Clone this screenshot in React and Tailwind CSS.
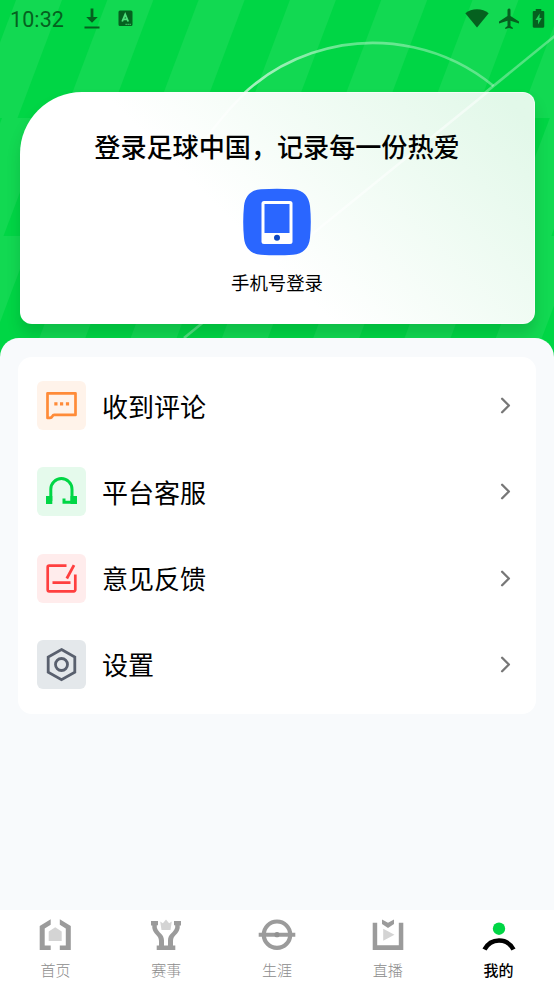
import { ChevronRight } from 'lucide-react'

const STRIPE_ROWS = [
  { y: 0, start: 16 },
  { y: 118, start: 2 },
  { y: 236, start: -13.5 }
]
const STRIPE_STEP = 91.3
const STRIPE_SLANT = 44.5

function PitchBackground() {
  return (
    <svg className="absolute left-0 top-0 h-[364px] w-[554px]" viewBox="0 0 554 364" fill="none" aria-hidden="true">
      <defs>
        <linearGradient id="arc" x1="210" y1="0" x2="494" y2="0" gradientUnits="userSpaceOnUse">
          <stop offset="0" stopColor="#fff" stopOpacity="0.75" />
          <stop offset="0.5" stopColor="#fff" stopOpacity="0.38" />
          <stop offset="1" stopColor="#fff" stopOpacity="0.32" />
        </linearGradient>
      </defs>
      <rect width="554" height="364" fill="#00d645" />
      {STRIPE_ROWS.map((row) =>
        [-1, 0, 1, 2, 3, 4, 5, 6].map((i) => {
          const x = row.start + i * STRIPE_STEP
          return (
            <path
              key={`${row.y}-${i}`}
              d={`M${x} ${row.y}h46l${-STRIPE_SLANT} 118h-46z`}
              fill="#12d952"
            />
          )
        })
      )}
      <path d="M188 190A190 190 0 0 1 493.5 86" stroke="url(#arc)" strokeWidth="2.6" />
      <path d="M556 35L184 338" stroke="#fff" strokeOpacity="0.32" strokeWidth="2.6" />
    </svg>
  )
}

function StatusBar() {
  return (
    <div className="flex h-[37px] items-center pl-[10px] pr-[9px] text-[#05611f]">
      <span className="mt-[2px] font-['Roboto',sans-serif] text-[21.5px] leading-none tracking-[0.1px]">10:32</span>
      <svg className="ml-[20px]" width="16" height="22" viewBox="0 0 16 22" fill="currentColor">
        <path d="M6.6 .5h2.800v8.500h4.400L8 14.800 2.200 9h4.400zM.5 18.500h15v2H.5z" />
      </svg>
      <svg className="ml-[18px]" width="15" height="17" viewBox="0 0 15 17" fill="none">
        <path d="M2 .5h11A1.500 1.500 0 0 1 14.500 2v12.500A1.500 1.500 0 0 1 13 16H2a1.500 1.500 0 0 1-1.500-1.500V2A1.500 1.500 0 0 1 2 .5z" fill="currentColor" />
        <path d="M4.200 11.500L7.200 4.300 10.200 11.500M5.300 9.400h4" stroke="#4de07a" strokeWidth="1.800" />
        <path d="M7.500 14.300h6" stroke="#4de07a" strokeWidth="1" strokeDasharray="1.300 0.700" />
      </svg>
      <svg className="ml-auto" width="24" height="20" viewBox="0 0 24 20" fill="currentColor">
        <path d="M12 18.500L.3 4.300C3.500 1.500 7.500.200 12 .200s8.500 1.300 11.700 4.100z" />
      </svg>
      <svg className="ml-[9px]" width="22" height="22" viewBox="0 0 22 22" fill="currentColor">
        <path d="M9.500 2a1.500 1.500 0 0 1 3 0v6L21 13.500v2l-8.500-2.700V18l2.300 1.700V21L11 20l-3.800 1v-1.300L9.500 18v-5.200L1 15.500v-2L9.500 8z" />
      </svg>
      <svg className="ml-[12px]" width="13" height="22" viewBox="0 0 14 22">
        <path d="M4 .3h6v2h2a1.200 1.200 0 0 1 1.200 1.200v15.600a1.200 1.200 0 0 1-1.200 1.200H2a1.200 1.200 0 0 1-1.200-1.200V3.500A1.200 1.200 0 0 1 2 2.300h2z" fill="currentColor" />
        <path d="M8.300 5L3.700 12h2.800v5l4-7H8z" fill="#19cf52" />
      </svg>
    </div>
  )
}

function LoginCard() {
  return (
    <div className="relative mx-[19.5px] mt-[55px] flex h-[231.5px] flex-col items-center overflow-hidden rounded-[12px] rounded-tl-[62px] border border-white/60 bg-linear-45 from-white from-42% to-[#e2f8e9] to-95% bg-origin-border shadow-[0_10px_14px_rgba(0,80,30,0.2)]">
      {/* pitch lines showing through the card */}
      <svg className="absolute -left-px -top-px" width="515" height="232" viewBox="19.5 92 515 232" fill="none" aria-hidden="true">
        <path d="M246 92Q228 108 206 138M487 92L250 284" stroke="#fff" strokeOpacity="0.5" strokeWidth="2.6" />
      </svg>
      <h1 className="relative mt-[34px] text-[26.1px] font-medium leading-[38px] text-black">登录足球中国，记录每一份热爱</h1>
      <button className="relative mt-[23px] flex flex-col items-center">
        <svg width="68" height="68" viewBox="0 0 68 68">
          <path
            d="M18 1.200Q34 .200 50 1.200C61 2 66 9 67 18Q68.600 34 67 50C66 60 60 66 50 66.800Q34 67.800 18 66.800C8 66 2 60 1 50Q-.600 34 1 18C2 9 7 2 18 1.200z"
            fill="#2a66ff"
          />
          <rect x="18.500" y="13" width="31" height="43" rx="2.500" fill="#fff" />
          <rect x="21.500" y="16" width="25" height="29" fill="#2a66ff" />
          <circle cx="34" cy="49.700" r="3" fill="#0d47c0" />
        </svg>
        <span className="mt-[13px] text-[18.4px] leading-[27px] text-black">手机号登录</span>
      </button>
    </div>
  )
}

const CommentIcon = () => (
  <svg width="33" height="33" viewBox="0 0 33 33" fill="none">
    <path d="M2.500 4.300h28v21.600H9.200c-1 0-1.400.500-1.900 1.500-.5 1-1.200 1.500-2.300 1.500H2.500z" stroke="#ff8b38" strokeWidth="2.700" strokeLinejoin="round" />
    <path d="M9.300 13.200h3.200v3.200H9.300zM15 13.200h3.200v3.200H15zM20.900 13.200h3.200v3.200h-3.200z" fill="#ff8b38" />
  </svg>
)

const HeadsetIcon = () => (
  <svg width="33" height="33" viewBox="0 0 33 33" fill="none">
    <path d="M5.800 26V14.200a10.600 10.600 0 0 1 21.200 0V27.200H19V23.500" stroke="#00d645" strokeWidth="3" />
    <path d="M1 21h6.300v8H1zM25.500 21H32v8h-6.500z" fill="#00d645" />
  </svg>
)

const FeedbackIcon = () => (
  <svg width="33" height="33" viewBox="0 0 33 33" fill="none">
    <path d="M21.500 3.700H4.200a1.500 1.500 0 0 0-1.500 1.500v22.600a1.500 1.500 0 0 0 1.500 1.500h24.600a1.500 1.500 0 0 0 1.500-1.500V12.500" stroke="#ff3f3f" strokeWidth="2.700" />
    <path d="M29 3.200L21.800 16.500M7.500 20.700h18" stroke="#ff3f3f" strokeWidth="2.800" />
  </svg>
)

const SettingsIcon = () => (
  <svg width="33" height="35" viewBox="0 0 33 35" fill="none">
    <path d="M16.500 2.500l13.300 7.600v15l-13.300 7.600L3.200 25.100v-15z" stroke="#59606e" strokeWidth="2.800" />
    <circle cx="16.500" cy="17.500" r="6" stroke="#59606e" strokeWidth="2.800" />
  </svg>
)

const menuItems = [
  { label: '收到评论', icon: CommentIcon, bg: 'bg-[#fff3ea]' },
  { label: '平台客服', icon: HeadsetIcon, bg: 'bg-[#e5faec]' },
  { label: '意见反馈', icon: FeedbackIcon, bg: 'bg-[#ffecec]' },
  { label: '设置', icon: SettingsIcon, bg: 'bg-[#e4e8eb]' }
]

const HomeIcon = () => (
  <svg width="34" height="34" viewBox="0 0 34 34">
    <path d="M12.700 1.200v5.500L6.700 10.500v17h6V32h-11V8zM21.800 1.200v5.500l6 3.800v17h-6V32h11V8z" fill="#9b9b9b" />
    <path d="M17.200 9.300l6.500 4.200V23h-13v-9.500z" fill="#d4d4d4" />
  </svg>
)

const TrophyIcon = () => (
  <svg width="34" height="34" viewBox="0 0 34 34">
    <path
      d="M2 3h7v4.300H7.800v2.200c1.200 5.500 7.200 6 7.200 13v5h4v-5c0-7 6-7.500 7.200-13V7.300H25V3h7v4.500h-1.300v2.500c-1.200 6.500-6.700 7-6.700 13v4.500h2.300V32H7.700v-4.500H10V23c0-6-5.500-6.500-6.700-13V7.500H2z"
      fill="#9b9b9b"
    />
    <path d="M11.200 3.500l2.700 1.700L17 1.500l3.100 3.700 2.700-1.700L21.500 12h-9z" fill="#d4d4d4" />
  </svg>
)

const CareerIcon = () => (
  <svg width="38" height="34" viewBox="0 0 38 34" fill="none">
    <circle cx="19" cy="16.700" r="13.200" stroke="#9b9b9b" strokeWidth="4.200" />
    <path d="M.7 16.700h36.600" stroke="#9b9b9b" strokeWidth="4" />
    <circle cx="19" cy="16.700" r="2.600" fill="#919191" />
  </svg>
)

const LiveIcon = () => (
  <svg width="34" height="34" viewBox="0 0 34 34">
    <path d="M1.700 4.800h4.500v22.500h21.600V4.800h4.500V32H1.700z" fill="#9b9b9b" />
    <path d="M11 1.500l6 3.200 6-3.200V6l-6 4-6-4z" fill="#9b9b9b" />
    <path d="M12.200 10.800l11.300 6-11.300 6z" fill="#d4d4d4" />
  </svg>
)

const ProfileIcon = () => (
  <svg width="34" height="34" viewBox="0 0 34 34" fill="none">
    <circle cx="17" cy="10.700" r="6.200" fill="#00d645" />
    <path d="M2.500 31.500C9 19.500 25 19.500 31.500 31.500" stroke="#000" strokeWidth="4.600" />
  </svg>
)

const tabs = [
  { label: '首页', icon: HomeIcon },
  { label: '赛事', icon: TrophyIcon },
  { label: '生涯', icon: CareerIcon },
  { label: '直播', icon: LiveIcon },
  { label: '我的', icon: ProfileIcon, active: true }
]

export default function App() {
  return (
    <div className="relative flex h-[984px] w-[554px] flex-col overflow-hidden bg-[#f8fafc] font-['Noto_Sans_CJK_SC',sans-serif]">
      <PitchBackground />

      <header className="relative h-[338px] shrink-0">
        <StatusBar />
        <LoginCard />
      </header>

      {/* Menu */}
      <main className="relative flex-1 rounded-t-[19px] bg-[#f8fafc] px-[18px] pt-[19px]">
        <div className="h-[357px] rounded-[14px] bg-white px-[19px] pt-[5.6px]">
          {menuItems.map(({ label, icon: Icon, bg }) => (
            <button key={label} className="flex h-[86.2px] w-full items-center">
              <span className={`flex h-[49px] w-[49px] items-center justify-center rounded-[6px] ${bg}`}>
                <Icon />
              </span>
              <span className="ml-[16px] text-[26px] leading-[38px] text-black">{label}</span>
              <ChevronRight className="-mr-[2px] ml-auto h-[27px] w-[27px] text-[#777]" strokeWidth={2.1} />
            </button>
          ))}
        </div>
      </main>

      {/* Bottom tabs */}
      <nav className="relative grid h-[74.5px] shrink-0 grid-cols-5 bg-white">
        {tabs.map(({ label, icon: Icon, active }) => (
          <button key={label} className="flex flex-col items-center pt-[8.5px]">
            <Icon />
            <span className={`mt-[5.5px] text-[15px] leading-[24px] ${active ? 'font-medium text-black' : 'font-light text-[#8c8c8c]'}`}>
              {label}
            </span>
          </button>
        ))}
      </nav>
    </div>
  )
}
